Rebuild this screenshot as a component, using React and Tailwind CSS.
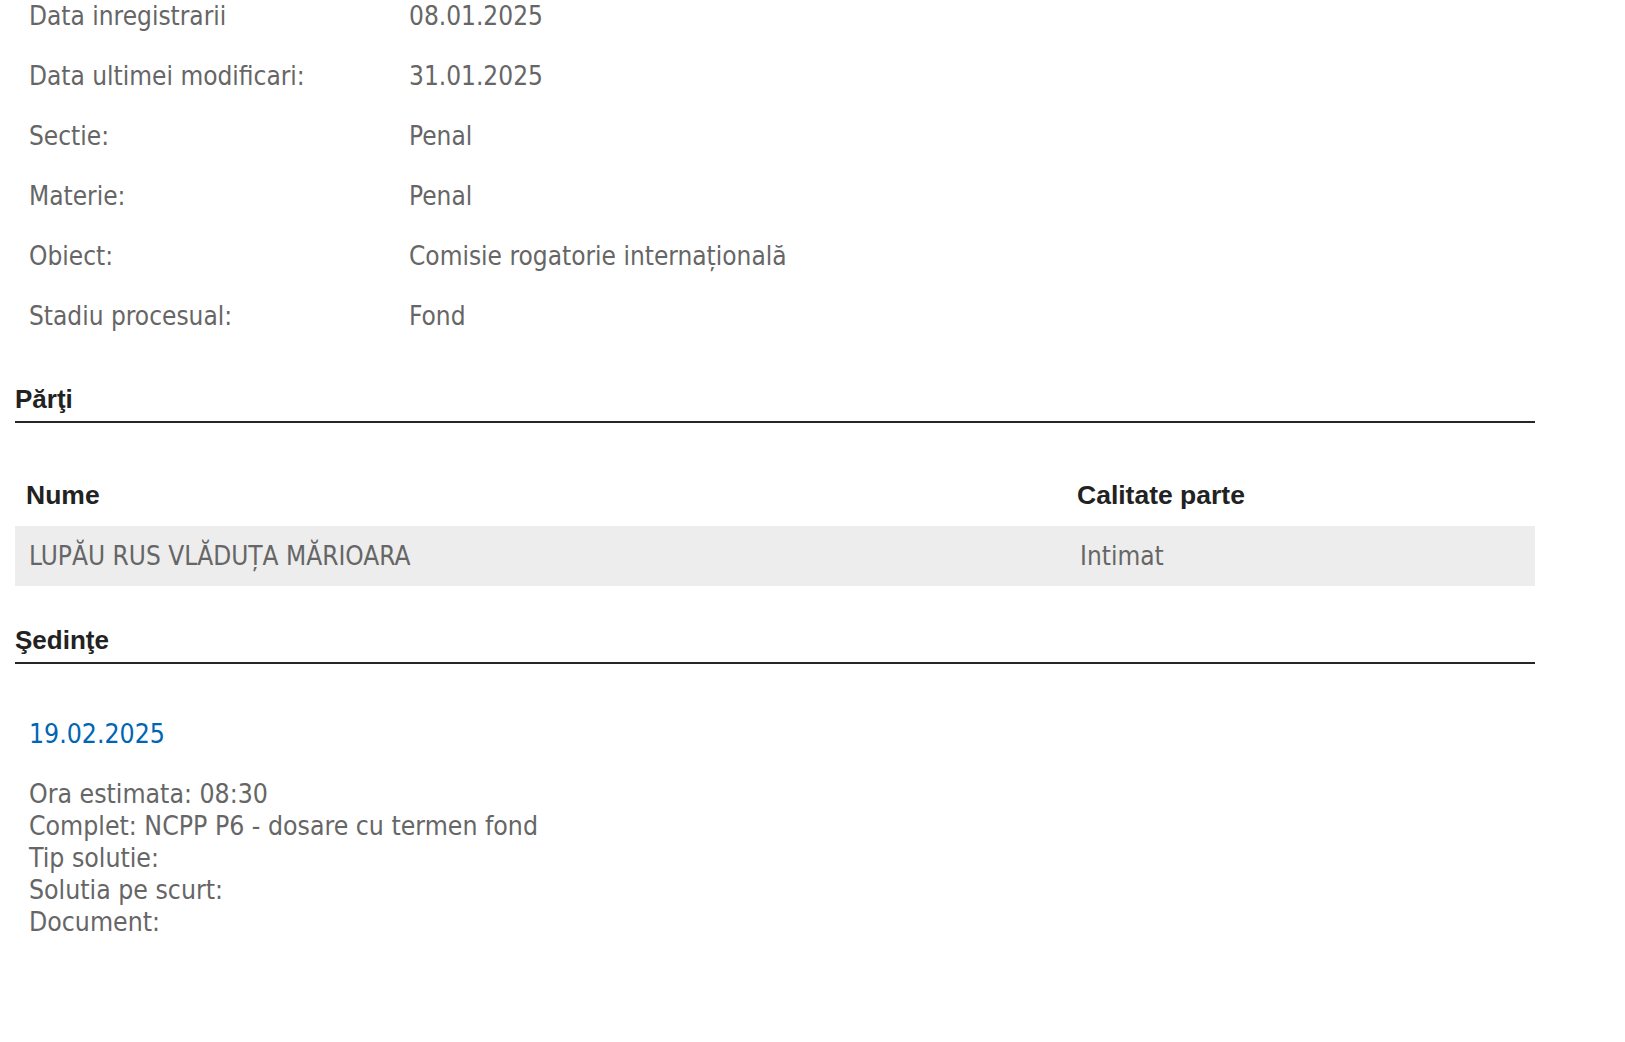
import React from "react";

const details = [
  { label: "Data inregistrarii", value: "08.01.2025" },
  { label: "Data ultimei modificari:", value: "31.01.2025" },
  { label: "Sectie:", value: "Penal" },
  { label: "Materie:", value: "Penal" },
  { label: "Obiect:", value: "Comisie rogatorie internațională" },
  { label: "Stadiu procesual:", value: "Fond" },
];

const parti = [{ nume: "LUPĂU RUS VLĂDUȚA MĂRIOARA", calitate: "Intimat" }];

const sedinta = [
  "Ora estimata: 08:30",
  "Complet: NCPP P6 - dosare cu termen fond",
  "Tip solutie:",
  "Solutia pe scurt:",
  "Document:",
];

// Section title with the dark rule under it
const SectionTitle = ({ children, className = "" }) => (
  <h2
    className={`border-b-2 border-[#262626] pb-[7px] font-['Liberation_Sans',Arial,sans-serif] text-[26px] leading-[30px] font-bold text-[#222] ${className}`}
  >
    {children}
  </h2>
);

export default function App() {
  return (
    <div className="min-h-screen bg-white font-['DejaVu_Sans_Condensed','DejaVu_Sans',sans-serif] text-[26px] text-[#666]">
      <div className="-mt-[14px] w-[1520px] ml-[15px]">
        {/* Dosar details */}
        <div className="flex flex-col">
          {details.map((row) => (
            <div key={row.label} className="flex h-[60px] items-center pl-[14px]">
              <span className="w-[380px] shrink-0">{row.label}</span>
              <span>{row.value}</span>
            </div>
          ))}
        </div>

        <SectionTitle className="mt-[38px]">Părţi</SectionTitle>

        <div className="mt-[42px] grid grid-cols-[1051px_1fr]">
          <div className="flex h-[61px] items-center pl-[11px] font-['Liberation_Sans',Arial,sans-serif] text-[26.5px] font-bold text-[#222]">
            Nume
          </div>
          <div className="flex h-[61px] items-center pl-[11px] font-['Liberation_Sans',Arial,sans-serif] text-[26.5px] font-bold text-[#222]">
            Calitate parte
          </div>
          {parti.map((p) => (
            <React.Fragment key={p.nume}>
              <div className="flex h-[60px] items-center bg-[#ededed] pl-[14px]">
                {p.nume}
              </div>
              <div className="flex h-[60px] items-center bg-[#ededed] pl-[14px]">
                {p.calitate}
              </div>
            </React.Fragment>
          ))}
        </div>

        <SectionTitle className="mt-[39px]">Şedinţe</SectionTitle>

        <div className="pl-[14px] text-[26.4px] leading-[32px]">
          <div className="mt-[54px] text-[#0066b3]">19.02.2025</div>
          <div className="mt-[28px]">
            {sedinta.map((line) => (
              <div key={line}>{line}</div>
            ))}
          </div>
        </div>
      </div>
    </div>
  );
}
